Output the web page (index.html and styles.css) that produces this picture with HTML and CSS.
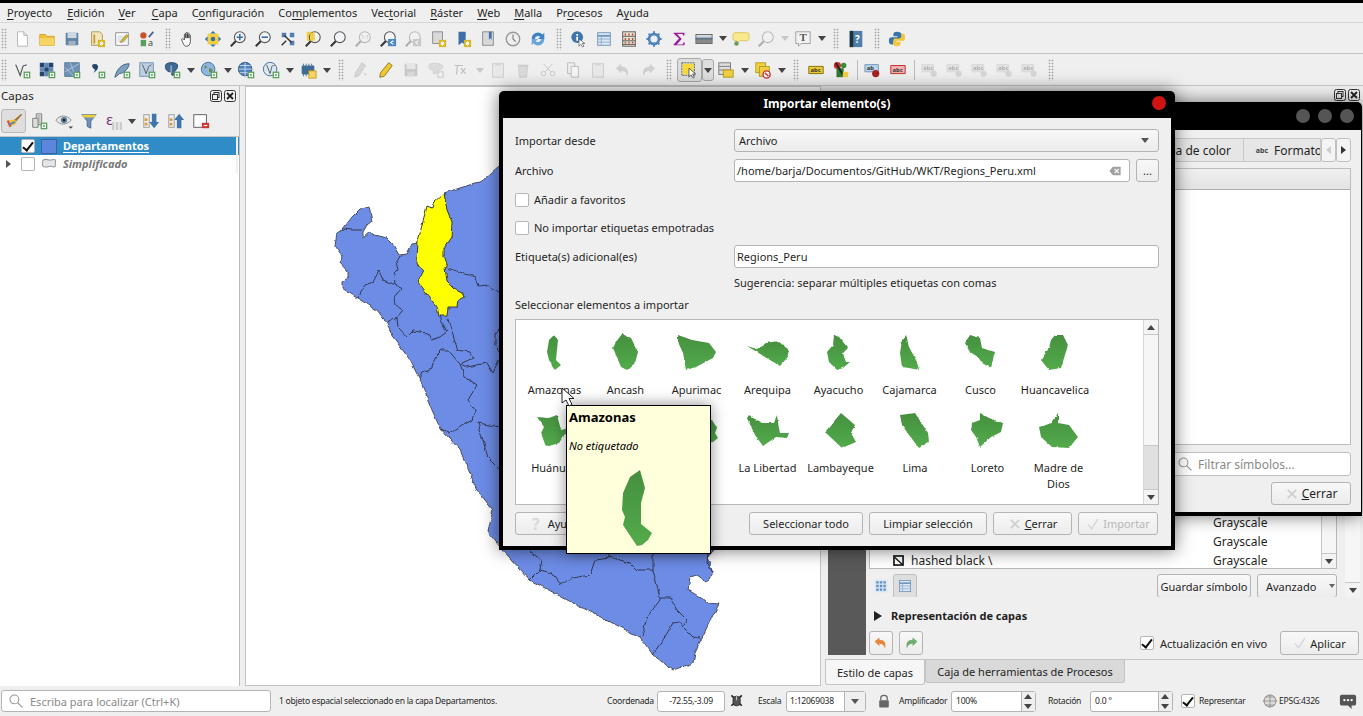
FILE: index.html
```html
<!DOCTYPE html>
<html lang="es">
<head>
    <meta charset="UTF-8">
    <title>QGIS - Importar elemento(s)</title>
    <link rel="stylesheet" href="styles.css">
</head>
<body>
<svg class="sprite" xmlns="http://www.w3.org/2000/svg">
    <defs>
        <linearGradient id="sym-green" x1="0" y1="0" x2="0" y2="1"><stop offset="0" stop-color="#458f3f"/><stop offset="1" stop-color="#53ab4b"/></linearGradient>
        <filter id="rough" x="-5%" y="-5%" width="110%" height="110%"><feTurbulence type="fractalNoise" baseFrequency="0.13" numOctaves="2" seed="4"/><feDisplacementMap in="SourceGraphic" scale="4" xChannelSelector="R" yChannelSelector="G"/></filter>
        <filter id="rough-s" x="-15%" y="-15%" width="130%" height="130%"><feTurbulence type="fractalNoise" baseFrequency="0.2" numOctaves="2" seed="7"/><feDisplacementMap in="SourceGraphic" scale="2.500" xChannelSelector="R" yChannelSelector="G"/></filter>
    </defs>
    <symbol id="b-plus" viewBox="0 0 20 20"><rect x="12.500" y="12.500" width="6" height="6" fill="#fff" stroke="#5a9e5a" stroke-width="1.400"/><path d="M15.500 14v3M14 15.500h3" stroke="#5a9e5a"/></symbol>
    <symbol id="b-star" viewBox="0 0 20 20"><rect x="11" y="11" width="8" height="8" fill="#d8b62a"/><path d="M15 12.500v5M12.800 15h4.400M13.400 13.400l3.200 3.200M16.600 13.400l-3.200 3.200" stroke="#fff"/></symbol>
    <symbol id="i-new" viewBox="0 0 20 20"><path d="M5 2h7l4 4v12H5z" fill="#fff" stroke="#b3b3b3"/><path d="M12 2v4h4" fill="#e6e6e6" stroke="#b3b3b3"/></symbol>
    <symbol id="i-open" viewBox="0 0 20 20"><path d="M2 5h6l2 2h8v10H2z" fill="#eec23f" stroke="#cfa02a"/><path d="M2 9h16v8H2z" fill="#f7d565"/></symbol>
    <symbol id="i-save" viewBox="0 0 20 20"><rect x="3" y="3" width="14" height="14" rx="1" fill="#5f83a6"/><rect x="5" y="3" width="10" height="6" fill="#cfd8e0"/><rect x="6" y="12" width="8" height="5" fill="#9fb0c0"/></symbol>
    <symbol id="i-saveas" viewBox="0 0 20 20"><path d="M4 2h9l3 3v12H4z" fill="#f2e6bf" stroke="#a8935a"/><path d="M6 5h2v10H6z" fill="#c79a3a"/><use href="#b-star"/></symbol>
    <symbol id="i-layout" viewBox="0 0 20 20"><path d="M3 3h14v14H3z" fill="#fff" stroke="#888"/><path d="M5 6h10v8H5z" fill="#dbe6f0"/><path d="M9 12l6-7 2 2-6 6-3 1z" fill="#d8b62a" stroke="#8a7420" stroke-width=".6"/></symbol>
    <symbol id="i-style" viewBox="0 0 20 20"><circle cx="6" cy="6" r="3.500" fill="#c8532c"/><rect x="3" y="11" width="6" height="7" fill="#5aa05a"/><path d="M12 8l5-6" stroke="#44698f" stroke-width="2"/></symbol>
    <symbol id="i-hand" viewBox="0 0 20 20"><path d="M6 11V5c0-1 1.600-1 1.600 0v4V3.500c0-1 1.700-1 1.700 0V9V4c0-1 1.700-1 1.700 0v5V6c0-1 1.600-1 1.600 0v7c0 3-2 5-4.500 5S5 16 3 11c-.5-1.500 1.500-2 3 0z" fill="#fff" stroke="#333" stroke-width=".9"/></symbol>
    <symbol id="i-pan" viewBox="0 0 20 20"><rect x="4" y="4" width="12" height="12" fill="#f0d040"/><path d="M10 1l3 3H7zM10 19l-3-3h6zM1 10l3-3v6zM19 10l-3 3V7z" fill="#3a6ea8"/><circle cx="10" cy="10" r="2.500" fill="#3a6ea8"/></symbol>
    <symbol id="m-glass" viewBox="0 0 20 20"><path d="M8 12l-6 6" stroke="#333" stroke-width="2.200"/><circle cx="12" cy="8" r="6" fill="#f2f5f8" stroke="#555" stroke-width="1.200"/></symbol>
    <symbol id="i-zin" viewBox="0 0 20 20"><use href="#m-glass"/><path d="M12 4.500v7M8.500 8h7" stroke="#3a6ea8" stroke-width="1.800"/></symbol>
    <symbol id="i-zout" viewBox="0 0 20 20"><use href="#m-glass"/><path d="M8.500 8h7" stroke="#3a6ea8" stroke-width="1.800"/></symbol>
    <symbol id="i-zfull" viewBox="0 0 20 20"><path d="M3 3h5v5H3zM12 3h5v5h-5zM12 12h5v5h-5z" fill="#4f7fb5"/><path d="M6 6l8 8M3 17l5-5" stroke="#333" stroke-width="1.600"/></symbol>
    <symbol id="i-zsel" viewBox="0 0 20 20"><rect x="3" y="2" width="8" height="10" fill="#f0d040"/><use href="#m-glass"/><path d="M7 3h5v9H7z" fill="#f0d040"/></symbol>
    <symbol id="i-zlayer" viewBox="0 0 20 20"><use href="#m-glass"/></symbol>
    <symbol id="i-zlast" viewBox="0 0 20 20"><use href="#m-glass"/><rect x="10" y="10" width="9" height="8" fill="#4f88c0"/><path d="M16 12l-3 2 3 2" fill="none" stroke="#fff" stroke-width="1.200"/></symbol>
    <symbol id="i-book" viewBox="0 0 20 20"><path d="M4 2h11v13H4z" fill="#d8d8d8" stroke="#888"/><use href="#b-star"/></symbol>
    <symbol id="i-bookb" viewBox="0 0 20 20"><path d="M5 2h8v15l-4-3-4 3z" fill="#3f6fa8"/><use href="#b-star"/></symbol>
    <symbol id="i-bookg" viewBox="0 0 20 20"><path d="M4 2h12v15H4z" fill="#d8d8d8" stroke="#888"/><path d="M11 2h3v9l-1.500-2L11 11z" fill="#3f6fa8"/></symbol>
    <symbol id="i-clock" viewBox="0 0 20 20"><circle cx="10" cy="10" r="7.500" fill="#eee" stroke="#999" stroke-width="1.500"/><path d="M10 5v5l3 3" fill="none" stroke="#777" stroke-width="1.200"/></symbol>
    <symbol id="i-refresh" viewBox="0 0 20 20"><path d="M3 10a7 7 0 0 1 12-5l2-2v7h-7l2.500-2.500A3.600 3.600 0 0 0 6.500 10z" fill="#3f83c4"/><path d="M17 10a7 7 0 0 1-12 5l-2 2v-7h7l-2.500 2.500A3.600 3.600 0 0 0 13.500 10z" fill="#6aa6dc"/></symbol>
    <symbol id="i-info" viewBox="0 0 20 20"><circle cx="8" cy="8" r="6.500" fill="#3f74ad"/><path d="M7 4.500h2v2H7zM7 7.500h2V12H7z" fill="#fff"/><path d="M10 10v8l2-2 2 3 1.500-1-2-3h3z" fill="#fff" stroke="#444" stroke-width=".7"/></symbol>
    <symbol id="i-table" viewBox="0 0 20 20"><rect x="3" y="3" width="14" height="14" fill="#dbe8f4" stroke="#6c93ba"/><path d="M3 6.500h14" stroke="#6c93ba" stroke-width="2"/><path d="M3 10h14M3 13.500h14M7 7v10" stroke="#8eaccb"/></symbol>
    <symbol id="i-calc" viewBox="0 0 20 20"><rect x="3" y="2" width="14" height="16" fill="#e8e0d0" stroke="#555"/><path d="M3 7h14M3 12h14M3 16h14" stroke="#555"/><path d="M6 4v2M10 4v2M14 4v2M6 9v2M10 9v2M14 9v2M6 13v2M10 13v2M14 13v2" stroke="#b34a3a" stroke-width="1.500"/></symbol>
    <symbol id="i-gear" viewBox="0 0 20 20"><circle cx="10" cy="10" r="5.500" fill="none" stroke="#4f83bd" stroke-width="3"/><path d="M10 1.500v4M10 14.500v4M1.500 10h4M14.500 10h4M4 4l3 3M13 13l3 3M16 4l-3 3M7 13l-3 3" stroke="#4f83bd" stroke-width="2.200"/></symbol>
    <symbol id="i-sigma" viewBox="0 0 20 20"><path d="M4 3h12v3h-1.500l-.5-1.500H8l5 5.500-5.500 6H14l1-2h1.500L16 17H4v-1l6-6.500L4 4z" fill="#9a1aa0"/></symbol>
    <symbol id="i-ruler" viewBox="0 0 20 20"><rect x="1" y="5" width="18" height="5" fill="#d8d8d8" stroke="#666"/><rect x="1" y="10" width="18" height="5" fill="#888" stroke="#666"/><path d="M1 9h18" stroke="#3a6ea8"/></symbol>
    <symbol id="i-note" viewBox="0 0 20 20"><path d="M3 3h14c2 0 2 2 2 3v3c0 3-2 3-4 3H8l-4 4 1-4c-3 0-4-1-4-3V6c0-2 1-3 2-3z" fill="#f7e98c" stroke="#d6c45a"/><circle cx="5" cy="15" r="2.500" fill="#6a9a55"/></symbol>
    <symbol id="i-tbub" viewBox="0 0 20 20"><path d="M2 2h16v13H8l-3 3v-3H2z" fill="#f2f2f2" stroke="#999"/></symbol>
    <symbol id="i-help" viewBox="0 0 20 20"><rect x="3" y="1" width="14" height="18" fill="#4f7ea8"/><rect x="3" y="1" width="4" height="18" fill="#1e2f3e"/></symbol>
    <symbol id="i-python" viewBox="0 0 20 20"><path d="M10 2c-3 0-4 1-4 3v2h4.500v1H4c-2 0-3 1-3 4s1 4 3 4h2v-2.500c0-2 1-3 3-3h4c1.500 0 2-.5 2-2V5c0-2-2-3-5-3z" fill="#3a74a8"/><path d="M10 18c3 0 4-1 4-3v-2H9.500v-1H16c2 0 3-1 3-4s-1-4-3-4h-1v2.500c0 2-1 3-3 3H8c-1.500 0-2 .5-2 2V15c0 2 1 3 4 3z" fill="#f2c838"/></symbol>
    <symbol id="i-vline" viewBox="0 0 20 20"><path d="M3 4l5 12 3-10c1-2 3 0 4-2" fill="none" stroke="#555" stroke-width="1.300"/><use href="#b-plus"/></symbol>
    <symbol id="i-raster" viewBox="0 0 20 20"><path d="M2 2h5v5H2zM12 2h5v5h-5zM7 7h5v5H7zM2 12h5v5H2z" fill="#24466e"/><path d="M7 2h5v5H7zM2 7h5v5H2zM12 7h5v5h-5zM7 12h5v5H7z" fill="#5f88b5"/><use href="#b-plus"/></symbol>
    <symbol id="i-mesh" viewBox="0 0 20 20"><rect x="2" y="2" width="16" height="15" fill="#6f92b8" stroke="#4d6d90"/><path d="M2 12L18 3M2 7l10 10M8 2l6 15" stroke="#c4d4e4" stroke-width=".8"/><use href="#b-plus"/></symbol>
    <symbol id="i-comma" viewBox="0 0 20 20"><path d="M5 4c4-2 7 0 6 4-.5 2-3 4-5 5 2-2 2-3 1-4C5 8 4 6 5 4z" fill="#24466e"/><use href="#b-plus"/></symbol>
    <symbol id="i-feather" viewBox="0 0 20 20"><path d="M2 18C4 10 9 3 18 3c-1 5-4 10-11 11l-3 3z" fill="#7f9fc0" stroke="#3a5f85"/><use href="#b-plus"/></symbol>
    <symbol id="i-vvirt" viewBox="0 0 20 20"><rect x="2" y="2" width="15" height="15" fill="#bcd0e4" stroke="#6c8fb2"/><path d="M5 4l4 10 3-8c1-2 2 0 3-2" fill="none" stroke="#555"/><use href="#b-plus"/></symbol>
    <symbol id="i-pg" viewBox="0 0 20 20"><path d="M3 4c3-3 10-3 13 0 1 3-1 6-3 7v4l-3 1-1-4H7C3 11 2 7 3 4z" fill="#3f6a96" stroke="#24466e"/><path d="M9 5v9" stroke="#cfdcea"/><use href="#b-plus"/></symbol>
    <symbol id="m-globe" viewBox="0 0 20 20"><circle cx="9" cy="9" r="7.500" fill="#8fb6dc" stroke="#3f6a96"/><path d="M5 5c2 0 3 1 3 2L5 9zM10 8l4 1-1 4-3-1z" fill="#6a8a5a"/></symbol>
    <symbol id="i-wms" viewBox="0 0 20 20"><use href="#m-globe"/><use href="#b-plus"/></symbol>
    <symbol id="i-wcs" viewBox="0 0 20 20"><circle cx="9" cy="9" r="7.500" fill="#4f83bd" stroke="#24466e"/><path d="M1.500 9h15M9 1.500v15M3 5h12M3 13h12" stroke="#dbe8f4" stroke-width=".9"/><use href="#b-plus"/></symbol>
    <symbol id="i-wfs" viewBox="0 0 20 20"><circle cx="9" cy="9" r="7.500" fill="#dbe8f4" stroke="#3f6a96"/><path d="M5 4l4 10 2-8c1-2 2 0 3-1" fill="none" stroke="#555"/><use href="#b-plus"/></symbol>
    <symbol id="i-chip" viewBox="0 0 20 20"><rect x="3" y="5" width="14" height="10" rx="1" fill="#3f6a96"/><path d="M5 3v2M8 3v2M11 3v2M14 3v2M5 15v2M8 15v2" stroke="#3f6a96"/><rect x="11" y="11" width="8" height="8" fill="#f7d565" stroke="#c79a1e"/></symbol>
    <symbol id="i-pencil" viewBox="0 0 20 20"><path d="M13 2l4 3L8 17l-5 1 1-5z" fill="#f0c830" stroke="#8a7420"/></symbol>
    <symbol id="i-pencilg" viewBox="0 0 20 20"><path d="M11 2l4 3-7 11-5 2 1-5z" fill="#aaa" stroke="#888"/><path d="M13 12l4 3-3 2z" fill="#bbb"/></symbol>
    <symbol id="i-fx" viewBox="0 0 20 20"><path d="M3 5h9M6 5l-1 10M10 8l5 6M15 8l-5 6" stroke="#666" stroke-width="1.300" fill="none"/></symbol>
    <symbol id="i-bub" viewBox="0 0 20 20"><path d="M2 5c0-3 10-3 14-1 3 2 1 6-2 6l-3 1v3H7v-4C3 10 2 8 2 5z" fill="#bbb" stroke="#999"/><use href="#b-star"/></symbol>
    <symbol id="i-trash" viewBox="0 0 20 20"><path d="M5 6h10l-1 12H6z" fill="#c8b0a8" stroke="#a08078"/><path d="M4 4h12v2H4z" fill="#b09088"/></symbol>
    <symbol id="i-cut" viewBox="0 0 20 20"><circle cx="5" cy="14" r="2.500" fill="none" stroke="#777"/><circle cx="15" cy="14" r="2.500" fill="none" stroke="#777"/><path d="M7 12l8-9M13 12L5 3" stroke="#777"/></symbol>
    <symbol id="i-copy" viewBox="0 0 20 20"><path d="M4 2h8v12H4z" fill="#eee" stroke="#555"/><path d="M8 6h8v12H8z" fill="#fff" stroke="#555"/></symbol>
    <symbol id="i-paste" viewBox="0 0 20 20"><rect x="4" y="3" width="12" height="15" fill="#ddd" stroke="#888"/><rect x="7" y="2" width="6" height="3" fill="#aaa"/></symbol>
    <symbol id="i-undo" viewBox="0 0 20 20"><path d="M2 8l6-5v3c6 0 9 4 7 11-1-4-3-6-7-6v3z" fill="#999"/></symbol>
    <symbol id="i-redo" viewBox="0 0 20 20"><path d="M18 8l-6-5v3C6 6 3 10 5 17c1-4 3-6 7-6v3z" fill="#999"/></symbol>
    <symbol id="i-select" viewBox="0 0 20 20"><rect x="3" y="3" width="12" height="12" fill="#f7d93a"/><rect x="2" y="2" width="14" height="14" fill="none" stroke="#555" stroke-dasharray="2 1"/><path d="M10 8v10l2.500-2.500 2 3.500 1.500-1-2-3.500h3.500z" fill="#fff" stroke="#333" stroke-width=".8"/></symbol>
    <symbol id="i-attr" viewBox="0 0 20 20"><rect x="2" y="2" width="13" height="13" fill="#ddd" stroke="#777"/><path d="M2 6h13M2 10h13" stroke="#777"/><rect x="7" y="10" width="11" height="8" fill="#f0d040" stroke="#b39a20"/></symbol>
    <symbol id="i-desel" viewBox="0 0 20 20"><rect x="2" y="2" width="11" height="11" fill="#f0d040" stroke="#b39a20"/><rect x="6" y="6" width="11" height="11" fill="#f0d040" stroke="#b39a20"/><circle cx="14" cy="15" r="4" fill="#fff" stroke="#c83030" stroke-width="1.500"/><path d="M12 13l4 4" stroke="#c83030" stroke-width="1.500"/></symbol>
    <symbol id="i-abc" viewBox="0 0 20 20"><path d="M2 6h16v8H2z" fill="#eecb30" stroke="#7a6a10"/></symbol>
    <symbol id="i-pin" viewBox="0 0 20 20"><circle cx="6" cy="5" r="4" fill="#c83030"/><circle cx="13" cy="5" r="3" fill="#3a8a3a"/><rect x="5" y="8" width="8" height="10" fill="#2f7a2f"/><path d="M4 2l8 13" stroke="#222" stroke-width="2"/><rect x="12" y="12" width="6" height="6" fill="#f0d040"/></symbol>
    <symbol id="i-abcb" viewBox="0 0 20 20"><path d="M1 4h15v8H1z" fill="#bcd4ec" stroke="#6c93ba"/><circle cx="13" cy="14" r="4" fill="#a82020"/></symbol>
    <symbol id="i-abcr" viewBox="0 0 20 20"><path d="M2 5h16v9H2z" fill="#f2b0b0" stroke="#c02020"/></symbol>
    <symbol id="i-abcg" viewBox="0 0 20 20"><path d="M1 4h13v8H1z" fill="#ccc" stroke="#aaa"/><circle cx="14" cy="14" r="3.500" fill="#aaa"/></symbol>
    <symbol id="i-brush" viewBox="0 0 20 20"><path d="M18 2l-8 7 2 2 7-8z" fill="#a07030"/><path d="M2 10l9-2 2 5-8 4z" fill="#eec23f"/><path d="M2 10l3 7 2-1-3-7z" fill="#d05050"/><path d="M5 14l6-3" stroke="#5a80c0" stroke-width="2"/></symbol>
    <symbol id="i-addgrp" viewBox="0 0 20 20"><path d="M7 2h6v12H7z" fill="#eee" stroke="#777"/><path d="M3 7h6v10H3z" fill="#ddd" stroke="#777"/><path d="M9 3v10M11 3v10" stroke="#999"/><use href="#b-plus"/></symbol>
    <symbol id="i-eye" viewBox="0 0 20 20"><path d="M1 9c4-6 12-6 17 0-5 6-13 6-17 0z" fill="#e6e6e6" stroke="#888"/><circle cx="10" cy="9" r="3.500" fill="#5a7f9e"/><circle cx="10" cy="9" r="1.500" fill="#222"/><path d="M15 16h5l-2.500 2.500z" fill="#444"/></symbol>
    <symbol id="i-funnel" viewBox="0 0 20 20"><path d="M2 3h16l-6 7v8l-4-2v-6z" fill="#6f92b8" stroke="#3f6a96"/><path d="M2 3h16l-2 3H4z" fill="#f0d040"/></symbol>
    <symbol id="i-eps" viewBox="0 0 10 8"><path d="M0 0h10v8H0z" fill="#ccc"/><path d="M3 0v8M7 0v8" stroke="#fff"/></symbol>
    <symbol id="i-expand" viewBox="0 0 20 20"><rect x="2" y="3" width="6" height="14" fill="none" stroke="#999"/><path d="M3 7h3v3H3zM3 12h3v3H3z" fill="#e09a3a"/><path d="M11 2h5v9h3l-5.500 7L8 11h3z" fill="#3f74ad"/></symbol>
    <symbol id="i-collapse" viewBox="0 0 20 20"><rect x="2" y="3" width="6" height="14" fill="none" stroke="#999"/><path d="M3 7h3v3H3zM3 12h3v3H3z" fill="#e09a3a"/><path d="M11 18h5V9h3L13.500 2 8 9h3z" fill="#3f74ad"/></symbol>
    <symbol id="i-remove" viewBox="0 0 20 20"><rect x="2" y="3" width="14" height="14" fill="#fff" stroke="#555"/><rect x="11" y="12" width="8" height="6" fill="#d03030"/><path d="M13 15h4" stroke="#fff" stroke-width="1.400"/></symbol>
    <symbol id="i-search" viewBox="0 0 20 20"><circle cx="8" cy="8" r="5.500" fill="none" stroke="#999" stroke-width="1.300"/><path d="M12 12l6 6" stroke="#999" stroke-width="1.600"/></symbol>
    <symbol id="i-mouse" viewBox="0 0 20 20"><path d="M3 3l13 13M16 3L3 16" stroke="#222" stroke-width="2"/><rect x="5" y="4" width="9" height="12" rx="4" fill="#555" stroke="#222"/><path d="M9.500 4v5" stroke="#eee"/></symbol>
    <symbol id="i-lock" viewBox="0 0 20 20"><path d="M6 9V6c0-4 8-4 8 0v3" fill="none" stroke="#666" stroke-width="1.600"/><rect x="4" y="9" width="12" height="9" rx="1" fill="#666"/></symbol>
    <symbol id="i-crs" viewBox="0 0 20 20"><circle cx="10" cy="10" r="7.500" fill="#ddd" stroke="#777"/><path d="M1 10h18M10 2v16M4 5h12M4 15h12" stroke="#777" stroke-width=".8"/></symbol>
    <symbol id="i-chat" viewBox="0 0 20 20"><path d="M3 3h14c1 0 2 1 2 2v8c0 1-1 2-2 2h-3v4l-4-4H3c-1 0-2-1-2-2V5c0-1 1-2 2-2z" fill="#555"/><circle cx="6" cy="9" r="1.300" fill="#fff"/><circle cx="10" cy="9" r="1.300" fill="#fff"/><circle cx="14" cy="9" r="1.300" fill="#fff"/></symbol>
    <symbol id="i-poly" viewBox="0 0 20 20"><path d="M2 6c2-3 5-2 8-1s6-2 8 0c1 3-1 5 0 8-3 2-5-1-8 0s-6 2-8-1c-1-2 1-4 0-6z" fill="#e6e6e6" stroke="#999" stroke-width="1.300"/></symbol>
    <symbol id="i-hash" viewBox="0 0 20 20"><rect x="3" y="3" width="14" height="14" fill="#fff" stroke="#111" stroke-width="2.500"/><path d="M4 5l12 11" stroke="#111" stroke-width="2"/></symbol>
    <symbol id="i-grid" viewBox="0 0 20 20"><rect x="2" y="2" width="16" height="16" fill="#dbe8f4"/><path d="M4 4h3v3H4zM8.500 4h3v3h-3zM13 4h3v3h-3zM4 8.500h3v3H4zM8.500 8.500h3v3h-3zM13 8.500h3v3h-3zM4 13h3v3H4zM8.500 13h3v3h-3zM13 13h3v3h-3z" fill="#5c8fc4"/></symbol>
    <symbol id="i-undo-o" viewBox="0 0 20 20"><path d="M2 8l6-5v3c6 0 9 4 7 11-1-4-3-6-7-6v3z" fill="#e8843c"/></symbol>
    <symbol id="i-redo-g" viewBox="0 0 20 20"><path d="M18 8l-6-5v3C6 6 3 10 5 17c1-4 3-6 7-6v3z" fill="#6fae6f"/></symbol>
    <symbol id="i-clear" viewBox="0 0 20 20"><path d="M2 10l5-6h11v12H7z" fill="#a0a0a0"/><path d="M9.500 7l6 6M15.500 7l-6 6" stroke="#fff" stroke-width="1.700"/></symbol>
    <symbol id="i-x" viewBox="0 0 20 20"><path d="M4 4l12 12M16 4L4 16" stroke="#cfcfcf" stroke-width="2.500"/></symbol>
    <symbol id="i-check" viewBox="0 0 20 20"><path d="M3 11l5 6L17 3" fill="none" stroke="#d4d4d4" stroke-width="1.800"/></symbol>
    <symbol id="i-float" viewBox="0 0 12 12"><rect x=".5" y=".5" width="11" height="11" rx="2" fill="#efefef" stroke="#333"/><rect x="4" y="2.500" width="5" height="5" fill="none" stroke="#333"/><rect x="2.500" y="4.500" width="5" height="5" fill="#efefef" stroke="#333"/></symbol>
    <symbol id="i-close" viewBox="0 0 12 12"><rect x=".5" y=".5" width="11" height="11" rx="2" fill="#efefef" stroke="#333"/><path d="M3 3l6 6M9 3L3 9" stroke="#222" stroke-width="1.800"/></symbol>
</svg>

<div class="app">
    <div class="topline"></div>
    <div class="menubar">
        <span class="menu-item"><u>P</u>royecto</span>
        <span class="menu-item menu-edit"><u>E</u>dición</span>
        <span class="menu-item"><u>V</u>er</span>
        <span class="menu-item menu-capa"><u>C</u>apa</span>
        <span class="menu-item">C<u>o</u>nfiguración</span>
        <span class="menu-item">Co<u>m</u>plementos</span>
        <span class="menu-item">Vec<u>t</u>orial</span>
        <span class="menu-item"><u>R</u>áster</span>
        <span class="menu-item"><u>W</u>eb</span>
        <span class="menu-item"><u>M</u>alla</span>
        <span class="menu-item">Pr<u>o</u>cesos</span>
        <span class="menu-item">A<u>y</u>uda</span>
    </div>

    <div class="toolbar toolbar-one">
        <span class="grip grip-first"></span>
        <span class="tb"><svg class="ic"><use href="#i-new"/></svg></span>
        <span class="tb"><svg class="ic"><use href="#i-open"/></svg></span>
        <span class="tb"><svg class="ic"><use href="#i-save"/></svg></span>
        <span class="tb"><svg class="ic"><use href="#i-saveas"/></svg></span>
        <span class="tb"><svg class="ic"><use href="#i-layout"/></svg></span>
        <span class="tb"><svg class="ic" viewBox="0 0 20 20"><use href="#i-style"/><text x="11" y="18" class="ic-txt">a</text></svg></span>
        <span class="grip"></span>
        <span class="tb"><svg class="ic"><use href="#i-hand"/></svg></span>
        <span class="tb"><svg class="ic"><use href="#i-pan"/></svg></span>
        <span class="tb"><svg class="ic"><use href="#i-zin"/></svg></span>
        <span class="tb"><svg class="ic"><use href="#i-zout"/></svg></span>
        <span class="tb"><svg class="ic"><use href="#i-zfull"/></svg></span>
        <span class="tb"><svg class="ic"><use href="#i-zsel"/></svg></span>
        <span class="tb"><svg class="ic"><use href="#i-zlayer"/></svg></span>
        <span class="tb off"><svg class="ic" viewBox="0 0 20 20"><use href="#i-zlayer"/><text x="8" y="10.500" class="ic-tiny">1:1</text></svg></span>
        <span class="tb"><svg class="ic"><use href="#i-zlast"/></svg></span>
        <span class="tb off"><svg class="ic"><use href="#i-zlast"/></svg></span>
        <span class="tb"><svg class="ic"><use href="#i-book"/></svg></span>
        <span class="tb"><svg class="ic"><use href="#i-bookb"/></svg></span>
        <span class="tb"><svg class="ic"><use href="#i-bookg"/></svg></span>
        <span class="tb"><svg class="ic"><use href="#i-clock"/></svg></span>
        <span class="tb"><svg class="ic"><use href="#i-refresh"/></svg></span>
        <span class="grip"></span>
        <span class="tb"><svg class="ic"><use href="#i-info"/></svg></span>
        <span class="tb"><svg class="ic"><use href="#i-table"/></svg></span>
        <span class="tb"><svg class="ic"><use href="#i-calc"/></svg></span>
        <span class="tb"><svg class="ic"><use href="#i-gear"/></svg></span>
        <span class="tb"><svg class="ic"><use href="#i-sigma"/></svg></span>
        <span class="tb"><svg class="ic"><use href="#i-ruler"/></svg></span>
        <span class="dd"></span>
        <span class="tb"><svg class="ic"><use href="#i-note"/></svg></span>
        <span class="tb off"><svg class="ic"><use href="#i-zlayer"/></svg></span>
        <span class="dd dd-off"></span>
        <span class="tb"><svg class="ic" viewBox="0 0 20 20"><use href="#i-tbub"/><text x="6" y="12.500" class="ic-t">T</text></svg></span>
        <span class="dd"></span>
        <span class="grip"></span>
        <span class="tb"><svg class="ic" viewBox="0 0 20 20"><use href="#i-help"/><text x="9" y="14" class="ic-q">?</text></svg></span>
        <span class="grip"></span>
        <span class="tb"><svg class="ic"><use href="#i-python"/></svg></span>
    </div>

    <div class="toolbar toolbar-two">
        <span class="grip grip-first"></span>
        <span class="tb"><svg class="ic"><use href="#i-vline"/></svg></span>
        <span class="tb"><svg class="ic"><use href="#i-raster"/></svg></span>
        <span class="tb"><svg class="ic"><use href="#i-mesh"/></svg></span>
        <span class="tb"><svg class="ic"><use href="#i-comma"/></svg></span>
        <span class="tb"><svg class="ic"><use href="#i-feather"/></svg></span>
        <span class="tb"><svg class="ic"><use href="#i-vvirt"/></svg></span>
        <span class="tb"><svg class="ic"><use href="#i-pg"/></svg></span>
        <span class="dd"></span>
        <span class="tb"><svg class="ic"><use href="#i-wms"/></svg></span>
        <span class="dd"></span>
        <span class="tb"><svg class="ic"><use href="#i-wcs"/></svg></span>
        <span class="tb"><svg class="ic"><use href="#i-wfs"/></svg></span>
        <span class="dd"></span>
        <span class="tb"><svg class="ic"><use href="#i-chip"/></svg></span>
        <span class="dd"></span>
        <span class="grip"></span>
        <span class="tb off"><svg class="ic"><use href="#i-pencilg"/></svg></span>
        <span class="tb"><svg class="ic"><use href="#i-pencil"/></svg></span>
        <span class="tb off"><svg class="ic"><use href="#i-save"/></svg></span>
        <span class="tb off"><svg class="ic"><use href="#i-bub"/></svg></span>
        <span class="tb off"><svg class="ic"><use href="#i-fx"/></svg></span>
        <span class="dd dd-off"></span>
        <span class="tb off"><svg class="ic"><use href="#i-paste"/></svg></span>
        <span class="tb off"><svg class="ic"><use href="#i-trash"/></svg></span>
        <span class="tb off"><svg class="ic"><use href="#i-cut"/></svg></span>
        <span class="tb off"><svg class="ic"><use href="#i-copy"/></svg></span>
        <span class="tb off"><svg class="ic"><use href="#i-paste"/></svg></span>
        <span class="tb off"><svg class="ic"><use href="#i-undo"/></svg></span>
        <span class="tb off"><svg class="ic"><use href="#i-redo"/></svg></span>
        <span class="grip"></span>
        <span class="tb tb-on"><svg class="ic"><use href="#i-select"/></svg></span>
        <span class="dd dd-on"></span>
        <span class="tb"><svg class="ic"><use href="#i-attr"/></svg></span>
        <span class="dd"></span>
        <span class="tb"><svg class="ic"><use href="#i-desel"/></svg></span>
        <span class="dd"></span>
        <span class="grip"></span>
        <span class="tb"><svg class="ic" viewBox="0 0 20 20"><use href="#i-abc"/><text x="4" y="12.500" class="ic-abc">abc</text></svg></span>
        <span class="tb"><svg class="ic"><use href="#i-pin"/></svg></span>
        <span class="tb-sep"></span>
        <span class="tb"><svg class="ic" viewBox="0 0 20 20"><use href="#i-abcb"/><text x="3" y="10.500" class="ic-abc">ab</text></svg></span>
        <span class="tb"><svg class="ic" viewBox="0 0 20 20"><use href="#i-abcr"/><text x="4" y="12" class="ic-abc">abc</text></svg></span>
        <span class="tb-sep"></span>
        <span class="tb off"><svg class="ic" viewBox="0 0 20 20"><use href="#i-abcg"/><text x="2.500" y="10.500" class="ic-abc">abc</text></svg></span>
        <span class="tb off"><svg class="ic" viewBox="0 0 20 20"><use href="#i-abcg"/><text x="2.500" y="10.500" class="ic-abc">abc</text></svg></span>
        <span class="tb off"><svg class="ic" viewBox="0 0 20 20"><use href="#i-abcg"/><text x="2.500" y="10.500" class="ic-abc">abc</text></svg></span>
        <span class="tb off"><svg class="ic" viewBox="0 0 20 20"><use href="#i-abcg"/><text x="2.500" y="10.500" class="ic-abc">abc</text></svg></span>
        <span class="tb off"><svg class="ic" viewBox="0 0 20 20"><use href="#i-abcg"/><text x="2.500" y="10.500" class="ic-abc">abc</text></svg></span>
        <span class="grip"></span>
    </div>

    <div class="main">
        <aside class="layers">
            <div class="dock-title dock-title-l">
                <span class="dock-name">Capas</span>
                <span class="dock-btns">
                    <svg class="dock-ic"><use href="#i-float"/></svg>
                    <svg class="dock-ic"><use href="#i-close"/></svg>
                </span>
            </div>
            <div class="layers-tools">
                <span class="lt lt-on"><svg class="ic"><use href="#i-brush"/></svg></span>
                <span class="lt"><svg class="ic"><use href="#i-addgrp"/></svg></span>
                <span class="lt"><svg class="ic"><use href="#i-eye"/></svg></span>
                <span class="lt"><svg class="ic"><use href="#i-funnel"/></svg></span>
                <span class="lt lt-expr"><span class="eps">ε</span><svg class="eps-ic"><use href="#i-eps"/></svg></span>
                <span class="dd"></span>
                <span class="lt"><svg class="ic"><use href="#i-expand"/></svg></span>
                <span class="lt"><svg class="ic"><use href="#i-collapse"/></svg></span>
                <span class="lt"><svg class="ic"><use href="#i-remove"/></svg></span>
            </div>
            <div class="tree">
                <div class="tree-row tree-sel">
                    <span class="arrow-none"></span>
                    <span class="check checked"></span>
                    <span class="swatch"></span>
                    <span class="tree-name">Departamentos</span>
                </div>
                <div class="tree-row">
                    <span class="arrow-none arrow-right"></span>
                    <span class="check"></span>
                    <svg class="tree-ic"><use href="#i-poly"/></svg>
                    <span class="tree-name tree-off">Simplificado</span>
                </div>
            </div>
        </aside>

        <div class="map">
            <svg class="map-svg" viewBox="246 87 574 598" xmlns="http://www.w3.org/2000/svg">
                <g filter="url(#rough)">
                    <polygon class="dept" points="499,166 482,181 444,193 418,243 412,244 407,254 399,255 392,243 387,238 374,235 370,232 363,238 363,232 367,225 372,221 369,207 360,209 352,217 343,229 337,233 335,246 343,257 340,263 348,272 348,278 342,282 342,288 357,298 377,310 387,323 393,337 410,360 420,380 432,410 440,428 460,450 477,490 493,510 488,532 500,547 530,580 573,603 640,637 653,655 673,670 693,663 695,652 712,617 719,604 707,603 700,597 688,590 690,577 697,575 707,582 713,573 707,557 713,550 760,500 760,200"/>
                    <polyline class="limit" points="343,229 352,230 362,230"/>
                    <polyline class="limit" points="399,255 396,262 398,270 395,273 396,285 402,288 394,297 395,305 403,310 397,317"/>
                    <polyline class="limit" points="357,298 365,285 373,282 379,271 383,280 396,285"/>
                    <polyline class="limit" points="387,322 397,317 398,327 407,337 413,331 427,333 432,340 440,337 447,332 439,316"/>
                    <polyline class="limit" points="447,316 455,342 458,350 470,352 473,358 460,364 448,350 442,350 435,357 432,368 420,373 420,380"/>
                    <polyline class="limit" points="460,364 467,367 487,363 493,373 499,360"/>
                    <polyline class="limit" points="460,364 465,377 477,385 468,400 475,410 472,420 450,433 440,428"/>
                    <polyline class="limit" points="447,268 475,277 478,286 488,285 499,292"/>
                    <polyline class="limit" points="499,330 495,335 495,345 499,352"/>
                    <polyline class="limit" points="478,423 488,458 500,470"/>
                    <polyline class="limit" points="478,423 500,427"/>
                    <polyline class="limit" points="530,552 542,560 540,570 530,580"/>
                    <polyline class="limit" points="540,570 552,573 560,584 573,578 590,575 595,560 610,558 610,550"/>
                    <polyline class="limit" points="610,557 630,563 637,570 653,570 653,550"/>
                    <polyline class="limit" points="653,570 660,597 660,600 647,617 642,637"/>
                    <polyline class="limit" points="660,598 670,598 677,610 687,620 683,627 680,622 673,623 663,640 652,655"/>
                    <polyline class="limit" points="683,627 693,637 700,638"/>
                    <polyline class="limit" points="708,550 707,563 713,573"/>
                    <polygon class="dept-sel" points="444,193 433,203 432,208 427,206 424,218 418,240 417,265 423,270 417,282 437,307 439,316 447,316 448,307 457,307 458,300 464,297 462,293 454,289 447,282 445,267 447,263 444,257 444,248 451,238 452,222 447,210"/>
                </g>
            </svg>
        </div>

        <aside class="dock">
            <div class="dock-title dock-title-r">
                <span class="dock-btns">
                    <svg class="dock-ic"><use href="#i-float"/></svg>
                    <svg class="dock-ic"><use href="#i-close"/></svg>
                </span>
            </div>
            <div class="dock-body">
                <div class="dark-side"></div>
                <div class="dock-pane">
                    <div class="scroll-area">
                        <div class="scroll-inner">
                            <div class="sym-list">
                                <div class="sym-rows">
                                    <div class="sym-row"><span class="sym-name"></span><span class="sym-tag">Grayscale</span></div>
                                    <div class="sym-row"><span class="sym-name"></span><span class="sym-tag">Grayscale</span></div>
                                    <div class="sym-row"><span class="sym-name"><svg class="hash-ic"><use href="#i-hash"/></svg>hashed black \</span><span class="sym-tag">Grayscale</span></div>
                                </div>
                                <div class="scrollbar sym-scroll"><span class="sb-fill"></span><span class="sb-btn sb-down"></span></div>
                            </div>
                            <div class="sym-actions">
                                <span class="view-btn"><svg class="ic-s"><use href="#i-grid"/></svg></span>
                                <span class="view-btn view-on"><svg class="ic-s"><use href="#i-table"/></svg></span>
                                <span class="btn btn-save">Guardar símbolo</span>
                                <span class="btn btn-adv">Avanzado<span class="caret"></span></span>
                            </div>
                        </div>
                        <div class="scrollbar outer-scroll"><span class="sb-fill"></span><span class="sb-btn sb-down"></span></div>
                    </div>
                    <div class="collapse-head"><span class="tri"></span>Representación de capas</div>
                    <div class="apply-row">
                        <span class="btn btn-icon"><svg class="ic-s"><use href="#i-undo-o"/></svg></span>
                        <span class="btn btn-icon"><svg class="ic-s"><use href="#i-redo-g"/></svg></span>
                        <span class="check checked check-live"></span>
                        <span class="live-label">Actualización en vivo</span>
                        <span class="btn btn-apply"><svg class="btn-ic"><use href="#i-check"/></svg>Aplicar</span>
                    </div>
                </div>
            </div>
            <div class="dock-tabs">
                <span class="dock-tab dock-tab-on">Estilo de capas</span>
                <span class="dock-tab dock-tab-off">Caja de herramientas de Procesos</span>
            </div>
        </aside>
    </div>

    <footer class="statusbar">
        <label class="locator"><svg class="ic-s"><use href="#i-search"/></svg><span>Escriba para localizar (Ctrl+K)</span></label>
        <span class="status-msg">1 objeto espacial seleccionado en la capa Departamentos.</span>
        <span class="st-label st-coordl">Coordenada</span>
        <span class="st-field st-coord">-72.55,-3.09</span>
        <svg class="st-mouse"><use href="#i-mouse"/></svg>
        <span class="st-label st-escala">Escala</span>
        <span class="st-field st-scale">1:12069038<span class="st-drop"><span class="caret caret-dark"></span></span></span>
        <svg class="st-lock"><use href="#i-lock"/></svg>
        <span class="st-label st-amp">Amplificador</span>
        <span class="st-field st-spin st-mag">100%<span class="spin"></span></span>
        <span class="st-label st-rot">Rotación</span>
        <span class="st-field st-spin st-rotv">0.0 °<span class="spin"></span></span>
        <span class="check checked check-render"></span>
        <span class="st-label st-rend">Representar</span>
        <svg class="st-crs"><use href="#i-crs"/></svg>
        <span class="st-label st-epsg">EPSG:4326</span>
        <svg class="st-chat"><use href="#i-chat"/></svg>
    </footer>
</div>

<section class="window win-symbols">
    <div class="win-bar">
        <span class="dot"></span><span class="dot"></span><span class="dot"></span>
    </div>
    <div class="win-body sm-body">
        <div class="sm-tabs">
            <span class="sm-tab">Mapa de color</span>
            <span class="sm-tab sm-tab-abc"><span class="abc-mini">abc</span><span class="sm-fmt">Formato</span></span>
            <span class="sm-arrow sm-arrow-off"><span class="tri-l"></span></span>
            <span class="sm-arrow"><span class="tri-r"></span></span>
        </div>
        <div class="sm-table"><div class="sm-head"></div></div>
        <div class="sm-filter"><svg class="ic-s"><use href="#i-search"/></svg><span>Filtrar símbolos...</span></div>
        <div class="sm-foot"><span class="btn btn-cerrar2"><svg class="btn-ic"><use href="#i-x"/></svg><span><u>C</u>errar</span></span></div>
    </div>
</section>

<section class="window win-import">
    <div class="win-bar win-bar-import">
        <span class="win-title">Importar elemento(s)</span>
        <span class="dot dot-close"></span>
    </div>
    <div class="win-body im-body">
        <div class="form-row">
            <span class="form-label">Importar desde</span>
            <span class="field combo">Archivo<span class="caret caret-dark"></span></span>
        </div>
        <div class="form-row">
            <span class="form-label">Archivo</span>
            <span class="field field-grow">/home/barja/Documentos/GitHub/WKT/Regions_Peru.xml<svg class="clear-ic"><use href="#i-clear"/></svg></span>
            <span class="btn btn-dots">...</span>
        </div>
        <div class="check-rows">
            <div class="check-row"><span class="check"></span><span class="check-text">Añadir a favoritos</span></div>
            <div class="check-row"><span class="check"></span><span class="check-text">No importar etiquetas empotradas</span></div>
        </div>
        <div class="form-row form-row-tags">
            <span class="form-label">Etiqueta(s) adicional(es)</span>
            <span class="field">Regions_Peru</span>
        </div>
        <div class="hint">Sugerencia: separar múltiples etiquetas con comas</div>
        <div class="list-label">Seleccionar elementos a importar</div>
        <div class="sym-view">
            <div class="sym-grid">
                <div class="sym-line">
                    <figure class="sym"><svg class="sym-ic" viewBox="532 334 44 38"><polygon points="553,335 557,340 556,350 555,360 560,365 554,370 548,360 546,352 548,340"/></svg><figcaption>Amazonas</figcaption></figure>
                    <figure class="sym"><svg class="sym-ic" viewBox="603 334 44 38"><polygon points="621,334 630,338 637,352 634,363 626,370 620,367 612,348 615,342"/></svg><figcaption>Ancash</figcaption></figure>
                    <figure class="sym"><svg class="sym-ic" viewBox="674 334 44 38"><polygon points="677,335 691,340 708,343 715,352 712,358 695,367 685,370 682,353 677,342"/></svg><figcaption>Apurimac</figcaption></figure>
                    <figure class="sym"><svg class="sym-ic" viewBox="745 334 44 38"><polygon points="746,346 756,349 765,343 777,341 788,350 786,358 779,366"/></svg><figcaption>Arequipa</figcaption></figure>
                    <figure class="sym"><svg class="sym-ic" viewBox="816 334 44 38"><polygon points="833,335 838,337 847,348 842,353 845,362 849,362 842,368 836,370 828,362 826,352 832,345"/></svg><figcaption>Ayacucho</figcaption></figure>
                    <figure class="sym"><svg class="sym-ic" viewBox="887 334 44 38"><polygon points="905,335 908,347 916,362 918,370 908,368 901,367 899,353 901,340"/></svg><figcaption>Cajamarca</figcaption></figure>
                    <figure class="sym"><svg class="sym-ic" viewBox="958 334 44 38"><polygon points="969,335 979,338 981,348 994,352 990,368 981,363 977,357 969,352 964,343"/></svg><figcaption>Cusco</figcaption></figure>
                    <figure class="sym sym-last"><svg class="sym-ic" viewBox="1033 334 44 38"><polygon points="1055,335 1063,335 1068,345 1061,368 1049,370 1041,360 1049,348 1051,340"/></svg><figcaption>Huancavelica</figcaption></figure>
                </div>
                <div class="sym-line">
                    <figure class="sym"><svg class="sym-ic" viewBox="529 412 44 38"><polygon points="533,417 545,418 553,415 557,430 565,428 555,443 542,447 537,433 540,427"/></svg><figcaption>Huánuco</figcaption></figure>
                    <figure class="sym"><svg class="sym-ic" viewBox="603 412 44 38"><polygon points="612,418 632,415 636,440 612,446"/></svg><figcaption>Ica</figcaption></figure>
                    <figure class="sym"><svg class="sym-ic" viewBox="674 412 44 38"><polygon points="690,418 711,420 716,428 714,433 717,438 712,442 690,445"/></svg><figcaption>Junín</figcaption></figure>
                    <figure class="sym"><svg class="sym-ic" viewBox="745 412 44 38"><polygon points="748,415 752,418 762,423 773,423 776,415 777,423 779,433 788,433 786,438 775,437 762,446 754,435 746,418"/></svg><figcaption>La Libertad</figcaption></figure>
                    <figure class="sym sym-wide"><svg class="sym-ic" viewBox="819 412 44 38"><polygon points="841,413 855,425 851,433 856,442 842,448 825,432"/></svg><figcaption>Lambayeque</figcaption></figure>
                    <figure class="sym sym-lima"><svg class="sym-ic" viewBox="894 412 44 38"><polygon points="901,415 916,413 929,433 930,442 920,448 910,435 903,425"/></svg><figcaption>Lima</figcaption></figure>
                    <figure class="sym"><svg class="sym-ic" viewBox="965 412 44 38"><polygon points="979,413 988,418 1002,423 1000,432 990,437 979,447 975,437 970,430 971,423 979,420"/></svg><figcaption>Loreto</figcaption></figure>
                    <figure class="sym"><svg class="sym-ic" viewBox="1036 412 44 38"><polygon points="1057,413 1057,423 1068,425 1077,437 1068,448 1051,447 1040,437 1038,427 1051,423"/></svg><figcaption>Madre de Dios</figcaption></figure>
                </div>
            </div>
            <div class="scrollbar list-scroll">
                <span class="sb-btn sb-up"></span>
                <span class="sb-fill"></span>
                <span class="sb-handle"></span>
                <span class="sb-btn sb-down"></span>
            </div>
        </div>
        <div class="dialog-btns">
            <span class="btn btn-help"><span class="help-q">?</span>Ayuda</span>
            <span class="btn btn-all">Seleccionar todo</span>
            <span class="btn btn-clear">Limpiar selección</span>
            <span class="btn btn-cerrar"><svg class="btn-ic"><use href="#i-x"/></svg><span><u>C</u>errar</span></span>
            <span class="btn btn-import"><svg class="btn-ic"><use href="#i-check"/></svg>Importar</span>
        </div>
    </div>
</section>

<aside class="tooltip">
    <div class="tip-title">Amazonas</div>
    <div class="tip-tag">No etiquetado</div>
    <svg class="tip-sym" viewBox="618 466 40 84"><polygon points="640,470 645,488 641,503 641,524 652,533 648,540 642,545 637,546 623,525 625,517 622,510 623,493 630,477"/></svg>
</aside>

<svg class="cursor" viewBox="0 0 14 20"><path d="M1 1v15l4-3 3 6 3-1.500-3-6h5z" fill="#fff" stroke="#222"/></svg>
</body>
</html>
```

FILE: styles.css
```css
html, body {
    margin: 0;
    height: 716px;
    overflow: hidden;
    background: #efefef;
    font-family: "Noto Sans", sans-serif;
    font-size: 11px;
    color: #1f1f1f;
}

.sprite {
    position: absolute;
    width: 0;
    height: 0;
}

.ic-txt { font: 10px "Noto Sans", sans-serif; fill: #444; }
.ic-tiny { font: 6px "Noto Sans", sans-serif; fill: #555; }
.ic-t { font: bold 12px "Liberation Serif", serif; fill: #555; }
.ic-q { font: bold 11px "Noto Sans", sans-serif; fill: #fff; }
.ic-abc { font: bold 6.500px "Noto Sans", sans-serif; fill: #333; }

.app {
    display: flex;
    flex-direction: column;
    height: 716px;
}

.topline {
    height: 3px;
    background: #000;
    flex: none;
}

/* menu */
.menubar {
    height: 19px;
    flex: none;
    display: flex;
    align-items: center;
    padding-left: 7px;
    gap: 14px;
    border-bottom: 1px solid #d8d8d8;
}

.menu-item u {
    text-underline-offset: 2px;
}

.menu-edit {
    margin-left: 1px;
}

.menu-capa {
    margin-left: 2px;
}

/* toolbars */
.toolbar {
    flex: none;
    display: flex;
    align-items: center;
    padding-top: 1px;
    border-bottom: 1px solid #c4c4c4;
    box-sizing: border-box;
}

.toolbar-one {
    height: 31px;
}

.toolbar-two {
    height: 32px;
}

.tb {
    width: 25px;
    height: 24px;
    flex: none;
    display: flex;
    align-items: center;
    justify-content: center;
    box-sizing: border-box;
}

.tb-on {
    background: #dedede;
    border: 1px solid #a8a8a8;
    border-radius: 3px;
}

.off .ic {
    opacity: 0.35;
    filter: grayscale(1);
}

.ic {
    width: 18px;
    height: 18px;
}

.ic-s {
    width: 16px;
    height: 16px;
    flex: none;
}

.dd {
    width: 12px;
    flex: none;
    display: flex;
    justify-content: center;
}

.dd::after {
    content: "";
    border: 4px solid transparent;
    border-top: 5px solid #444;
    border-bottom: 0;
}

.dd-off::after {
    border-top-color: #c8c8c8;
}

.dd-on {
    height: 22px;
    align-items: center;
    background: #dedede;
    border: 1px solid #a8a8a8;
    border-radius: 3px;
    box-sizing: border-box;
}

.grip {
    width: 16px;
    height: 22px;
    flex: none;
    box-sizing: border-box;
    padding: 0 5px;
    background: radial-gradient(circle, #a4a4a4 0.8px, transparent 1.1px) 0 0 / 3px 3px;
    background-origin: content-box;
    background-clip: content-box;
}

.grip-first {
    width: 9.500px;
    padding: 0 3px 0 1px;
}

.tb-sep {
    width: 7px;
    height: 20px;
    flex: none;
    background: linear-gradient(#bbb, #bbb) center / 1px 100% no-repeat;
}

/* panels */
.main {
    flex: 1;
    display: flex;
    min-height: 0;
    position: relative;
}

.layers {
    width: 239px;
    flex: none;
    display: flex;
    flex-direction: column;
    border-right: 1px solid #bcbcbc;
}

.dock-title {
    height: 20px;
    flex: none;
    display: flex;
    align-items: center;
    justify-content: space-between;
    font-size: 11.500px;
    padding: 0 2px 0 1px;
}

.dock-name {
    margin-top: -2px;
}

.dock-btns {
    display: flex;
    gap: 2px;
    padding-right: 1px;
}

.dock-ic {
    width: 12px;
    height: 12px;
}

.layers-tools {
    height: 30px;
    flex: none;
    display: flex;
    align-items: center;
    padding-left: 1px;
}

.lt {
    width: 25px;
    height: 24px;
    flex: none;
    display: flex;
    align-items: center;
    justify-content: center;
    box-sizing: border-box;
}

.lt-on {
    background: #dedede;
    border: 1px solid #b8b8b8;
    border-radius: 3px;
}

.lt-expr {
    position: relative;
}

.eps {
    font-size: 15px;
    color: #7a3a80;
    line-height: 20px;
    margin: -4px 0 0 -8px;
}

.eps-ic {
    position: absolute;
    left: 11px;
    top: 13px;
    width: 10px;
    height: 8px;
}

.layers-tools .dd {
    width: 11px;
    margin-right: 1px;
}

.tree {
    flex: 1;
    background: #fff;
    border-top: 1px solid #c4c4c4;
}

.tree-row {
    height: 18px;
    display: flex;
    align-items: center;
    font-weight: 700;
    font-size: 11px;
    position: relative;
}

.tree-row::after {
    content: "";
    position: absolute;
    right: 1px;
    top: 0;
    bottom: 0;
    width: 2px;
    background: #f0f0f0;
}

.tree-sel {
    background: #308cc6;
    color: #fff;
}

.arrow-none {
    width: 21px;
    flex: none;
    display: flex;
    justify-content: center;
    padding-right: 5px;
    box-sizing: border-box;
}

.arrow-right::after {
    content: "";
    border: 4px solid transparent;
    border-left: 5px solid #555;
    border-right: 0;
}

.check {
    width: 14px;
    height: 14px;
    flex: none;
    box-sizing: border-box;
    background: #fff;
    border: 1px solid #b5b5b5;
    border-radius: 2px;
    display: inline-flex;
    align-items: center;
    justify-content: center;
}

.checked::after {
    content: "";
    width: 4px;
    height: 9px;
    margin-top: -2px;
    border: solid #111;
    border-width: 0 2px 2px 0;
    transform: rotate(38deg);
}

.swatch {
    width: 16px;
    height: 15px;
    flex: none;
    margin-left: 6px;
    box-sizing: border-box;
    background: #5b86dc;
    border: 1px solid #3e5fa0;
}

.tree-ic {
    width: 16px;
    height: 16px;
    flex: none;
    margin-left: 6px;
}

.tree-name {
    margin: -2px 0 0 6px;
}

.tree-sel .tree-name {
    text-decoration: underline;
    text-underline-offset: 2px;
}

.tree-off {
    color: #777;
    font-style: italic;
}

/* map */
.map {
    width: 574px;
    flex: none;
    margin: 1px 8px 1px 6px;
    background: #fff;
    outline: 1px solid #c4c4c4;
}

.map-svg {
    display: block;
    width: 574px;
    height: 598px;
}

.dept {
    fill: #6d8ce6;
    stroke: #4a4f60;
    stroke-width: 1;
}

.limit {
    fill: none;
    stroke: #333a50;
    stroke-width: 1;
}

.dept-sel {
    fill: #ffff00;
    stroke: #3c3c3c;
    stroke-width: 1;
}

/* right dock */
.dock {
    flex: 1;
    display: flex;
    flex-direction: column;
    min-width: 0;
    margin-left: -3px;
}

.dock-title-r {
    justify-content: flex-end;
    height: 18px;
}

.dock-body {
    flex: 1;
    display: flex;
    min-height: 0;
    padding-left: 3px;
}

.dark-side {
    width: 38px;
    flex: none;
    background: #595959;
    margin-bottom: 4px;
}

.dock-pane {
    flex: 1;
    display: flex;
    flex-direction: column;
    min-width: 0;
    padding-left: 3px;
}

.scroll-area {
    flex: 1;
    display: flex;
    min-height: 0;
    overflow: hidden;
}

.scroll-inner {
    width: 468px;
    flex: none;
    display: flex;
    flex-direction: column;
    justify-content: flex-end;
}

.sym-list {
    display: flex;
    background: #fff;
    border: 1px solid #b8b8b8;
    height: 70px;
    box-sizing: border-box;
    overflow: hidden;
    flex: none;
}

.sym-rows {
    flex: 1;
    display: flex;
    flex-direction: column;
    justify-content: flex-end;
    margin-bottom: -2px;
}

.sym-row {
    height: 19px;
    display: flex;
    align-items: center;
    font-size: 12px;
    flex: none;
}

.sym-name {
    width: 343px;
    flex: none;
    padding-left: 22px;
    box-sizing: border-box;
    display: flex;
    align-items: center;
    gap: 6px;
}

.hash-ic {
    width: 13px;
    height: 13px;
    flex: none;
}

.scrollbar {
    display: flex;
    flex-direction: column;
    flex: none;
    width: 15px;
}

.sym-scroll {
    border-left: 1px solid #c8c8c8;
    box-sizing: border-box;
}

.outer-scroll {
    margin-left: 8px;
    justify-content: flex-end;
}

.sb-fill {
    flex: 1;
    background: #f6f6f6;
}

.sb-handle {
    height: 43px;
    flex: none;
    background: #e0e0e0;
    border-top: 1px solid #c8c8c8;
}

.sb-btn {
    height: 14px;
    flex: none;
    display: flex;
    align-items: center;
    justify-content: center;
    background: #f3f3f3;
    border-top: 1px solid #c8c8c8;
}

.sb-down::after {
    content: "";
    border: 4px solid transparent;
    border-top: 5px solid #444;
    border-bottom: 0;
}

.sb-up {
    border-top: 0;
    border-bottom: 1px solid #c8c8c8;
}

.sb-up::after {
    content: "";
    border: 4px solid transparent;
    border-bottom: 5px solid #444;
    border-top: 0;
}

.sym-actions {
    height: 28px;
    flex: none;
    display: flex;
    align-items: flex-start;
    padding-top: 5px;
    box-sizing: border-box;
    position: relative;
}

.view-btn {
    width: 24px;
    height: 24px;
    flex: none;
    display: flex;
    align-items: center;
    justify-content: center;
    box-sizing: border-box;
}

.view-on {
    background: #dedede;
    border: 1px solid #c0c0c0;
    border-radius: 3px 3px 0 0;
}

.btn {
    display: inline-flex;
    align-items: center;
    justify-content: center;
    box-sizing: border-box;
    background: linear-gradient(#f8f8f8, #ececec);
    border: 1px solid #b4b4b4;
    border-radius: 3px;
    font-size: 11px;
    flex: none;
}

.btn-save {
    width: 94px;
    height: 24px;
    margin-left: 240px;
}

.btn-adv {
    width: 80px;
    height: 24px;
    margin-left: 6px;
    justify-content: flex-start;
    padding-left: 8px;
    gap: 13px;
}

.caret {
    display: inline-block;
    border: 3.500px solid transparent;
    border-top: 4px solid #666;
    border-bottom: 0;
}

.caret-dark {
    border-top-color: #555;
    border-width: 4px;
    border-top-width: 5px;
    border-bottom-width: 0;
}

.collapse-head {
    height: 34px;
    flex: none;
    display: flex;
    align-items: center;
    font-weight: 700;
    font-size: 11px;
    padding: 3px 0 0 5px;
    box-sizing: border-box;
}

.tri {
    width: 0;
    height: 0;
    border: 5px solid transparent;
    border-left: 8px solid #222;
    border-right: 0;
    margin-right: 9px;
}

.apply-row {
    height: 24px;
    flex: none;
    display: flex;
    align-items: center;
    margin-bottom: 4px;
}

.btn-icon {
    width: 24px;
    height: 24px;
    margin-right: 6px;
}

.check-live {
    margin-left: 211px;
}

.live-label {
    margin-left: 6px;
    width: 120px;
    flex: none;
}

.btn-apply {
    width: 79px;
    height: 24px;
    gap: 3px;
}

.btn-ic {
    width: 14px;
    height: 14px;
    flex: none;
}

.dock-tabs {
    height: 27px;
    flex: none;
    display: flex;
    align-items: flex-start;
    border-top: 1px solid #c4c4c4;
    box-sizing: border-box;
}

.dock-tab {
    display: flex;
    align-items: center;
    border: 1px solid #c4c4c4;
    border-top: 0;
    border-radius: 0 0 3px 3px;
    box-sizing: border-box;
}

.dock-tab-off {
    width: 200px;
    height: 23px;
    justify-content: center;
    background: #d9d9d9;
}

.dock-tab-on {
    height: 25px;
    width: 100px;
    padding-left: 11px;
    background: #f6f6f6;
}

/* status bar */
.statusbar {
    height: 30px;
    flex: none;
    display: flex;
    align-items: center;
    font-size: 8.600px;
    letter-spacing: -0.27px;
    position: relative;
}

.statusbar svg {
    flex: none;
}

.locator {
    width: 270px;
    height: 22px;
    margin-left: 1px;
    flex: none;
    display: flex;
    align-items: center;
    gap: 6px;
    padding-left: 6px;
    box-sizing: border-box;
    background: #fff;
    border: 1px solid #b4b4b4;
    border-radius: 3px;
    color: #8a8a8a;
    font-size: 11px;
    letter-spacing: 0;
}

.status-msg {
    margin-left: 8px;
    width: 328px;
    flex: none;
}

.st-field {
    height: 21px;
    flex: none;
    display: flex;
    align-items: center;
    box-sizing: border-box;
    background: #fff;
    border: 1px solid #b4b4b4;
    border-radius: 3px;
    position: relative;
}

.st-label {
    flex: none;
    white-space: nowrap;
}

.st-coordl {
    width: 47px;
}

.st-coord {
    width: 68px;
    margin-left: 3px;
    justify-content: center;
}

.st-mouse {
    width: 16px;
    height: 16px;
    margin-left: 4px;
}

.st-escala {
    width: 23px;
    margin-left: 13px;
}

.st-scale {
    width: 80px;
    margin-left: 5px;
    padding-left: 3px;
}

.st-drop {
    position: absolute;
    right: 0;
    top: 0;
    bottom: 0;
    width: 20px;
    background: #efefef;
    border-left: 1px solid #b4b4b4;
    display: flex;
    align-items: center;
    justify-content: center;
}

.st-lock {
    width: 16px;
    height: 16px;
    margin-left: 10px;
}

.st-amp {
    width: 48px;
    margin-left: 7px;
}

.st-spin {
    padding-left: 4px;
}

.st-mag {
    width: 85px;
    margin-left: 4px;
}

.st-rot {
    width: 33px;
    margin-left: 12px;
}

.st-rotv {
    width: 83px;
    margin-left: 9px;
}

.spin {
    position: absolute;
    right: 0;
    top: 0;
    bottom: 0;
    width: 13px;
    background: #efefef;
    border-left: 1px solid #b4b4b4;
}

.spin::before, .spin::after {
    content: "";
    position: absolute;
    left: 2px;
    border: 4px solid transparent;
}

.spin::before {
    top: 2px;
    border-bottom: 5px solid #444;
    border-top: 0;
}

.spin::after {
    bottom: 2px;
    border-top: 5px solid #444;
    border-bottom: 0;
}

.check-render {
    margin-left: 8px;
}

.st-rend {
    width: 46px;
    margin-left: 4px;
}

.st-crs {
    width: 16px;
    height: 16px;
    margin-left: 17px;
}

.st-epsg {
    width: 40px;
    margin-left: 1px;
}

.st-chat {
    width: 18px;
    height: 18px;
    margin-left: 20px;
}

/* floating windows */
.window {
    position: absolute;
    display: flex;
    flex-direction: column;
    box-sizing: border-box;
    background: #000;
    border-radius: 5px 5px 0 0;
    padding: 0 4px 4px;
    box-shadow: 0 0 18px rgba(0, 0, 0, 0.55);
}

.win-bar {
    height: 28px;
    flex: none;
    display: flex;
    align-items: center;
    justify-content: flex-end;
    gap: 8px;
    padding-right: 7px;
}

.win-body {
    flex: 1;
    background: #efefef;
    min-height: 0;
}

.dot {
    width: 14px;
    height: 14px;
    border-radius: 50%;
    background: #555;
}

.dot-close {
    background: #d01414;
    position: absolute;
    right: 9px;
    top: 5px;
}

/* symbol manager behind the dialog */
.win-symbols {
    left: 1000px;
    top: 102px;
    width: 362px;
    height: 414px;
    padding-right: 1px;
}

.sm-body {
    display: flex;
    flex-direction: column;
    padding: 8px 10px 0 0;
    box-sizing: border-box;
}

.sm-tabs {
    height: 24px;
    flex: none;
    display: flex;
    justify-content: flex-end;
    align-items: stretch;
    font-size: 12px;
}

.sm-tab {
    display: flex;
    align-items: center;
    padding: 0 12px 0 0;
    background: #e6e6e6;
    border: 1px solid #c8c8c8;
    width: 76px;
    justify-content: flex-end;
    box-sizing: border-box;
    white-space: nowrap;
    flex: none;
}

.sm-tab-abc {
    width: 77px;
    padding-right: 0;
    border-left: 0;
    gap: 6px;
    overflow: hidden;
}

.sm-fmt {
    margin-right: -2px;
}

.abc-mini {
    font-size: 7px;
    font-weight: 700;
    color: #444;
}

.sm-arrow {
    width: 15px;
    flex: none;
    display: flex;
    align-items: center;
    justify-content: center;
    background: #f4f4f4;
    border: 1px solid #c0c0c0;
    border-radius: 3px;
    box-sizing: border-box;
}

.tri-r, .tri-l {
    width: 0;
    height: 0;
    border: 4px solid transparent;
}

.tri-r {
    border-left: 5px solid #333;
    border-right: 0;
}

.tri-l {
    border-right: 5px solid #ccc;
    border-left: 0;
}

.sm-table {
    height: 277px;
    flex: none;
    margin-top: 6px;
    background: #fff;
    border: 1px solid #bcbcbc;
    box-sizing: border-box;
}

.sm-head {
    height: 20px;
    background: linear-gradient(#efefef, #e4e4e4);
    border-bottom: 1px solid #b0b0b0;
}

.sm-filter {
    height: 24px;
    flex: none;
    margin-top: 7px;
    display: flex;
    justify-content: flex-start;
    align-items: center;
    gap: 5px;
    padding-left: 172px;
    background: #fff;
    border: 1px solid #c0c0c0;
    border-radius: 3px;
    box-sizing: border-box;
    color: #8a8a8a;
    font-size: 12px;
}

.sm-foot {
    display: flex;
    justify-content: flex-end;
    margin-top: 6px;
    padding-right: 0;
}

.btn-cerrar2 {
    width: 80px;
    height: 23px;
    gap: 3px;
    font-size: 12px;
}

/* import dialog */
.win-import {
    left: 499px;
    top: 91px;
    width: 676px;
    height: 459px;
    z-index: 2;
}

.win-bar-import {
    justify-content: center;
    height: 27px;
    padding: 0 20px 3px 0;
    box-sizing: border-box;
}

.win-title {
    color: #fff;
    font-weight: 700;
    font-size: 11.800px;
}

.im-body {
    padding: 11px 12px 0;
    box-sizing: border-box;
}

.form-row {
    display: flex;
    align-items: center;
    height: 23px;
    margin-bottom: 7px;
}

.form-label {
    width: 219px;
    flex: none;
}

.field {
    flex: 1;
    height: 23px;
    display: flex;
    align-items: center;
    justify-content: space-between;
    box-sizing: border-box;
    padding: 0 9px 0 2px;
    background: #fff;
    border: 1px solid #b4b4b4;
    border-radius: 3px;
}

.combo {
    background: linear-gradient(#f8f8f8, #ececec);
    padding-left: 4px;
}

.field-grow {
    margin-right: 6px;
}

.clear-ic {
    width: 14px;
    height: 14px;
    flex: none;
    margin-right: -2px;
}

.btn-dots {
    width: 23px;
    height: 23px;
}

.check-rows {
    display: flex;
    flex-direction: column;
    gap: 14px;
    margin: 11px 0 10px;
}

.check-row {
    height: 14px;
    display: flex;
    align-items: center;
    gap: 5px;
}

.check-text {
    margin-top: -2px;
}

.form-row-tags {
    margin-bottom: 0;
}

.hint {
    margin: 6px 0 0 219px;
    height: 17px;
    display: flex;
    align-items: center;
}

.list-label {
    margin-top: 5px;
    height: 17px;
    display: flex;
    align-items: center;
}

.sym-view {
    margin-top: 6px;
    height: 186px;
    display: flex;
    box-sizing: border-box;
    background: #fff;
    border: 1px solid #b8b8b8;
}

.sym-grid {
    flex: 1;
    padding: 14px 0 0 3px;
    box-sizing: border-box;
}

.sym-line {
    display: flex;
    height: 78px;
}

.sym {
    width: 71px;
    margin: 0;
    flex: none;
    display: flex;
    flex-direction: column;
    align-items: center;
    text-align: center;
}

.sym-wide {
    width: 75px;
}

.sym-lima {
    width: 74px;
}

.sym-last {
    width: 78px;
}

.sym figcaption {
    margin-top: 10px;
    line-height: 16px;
    width: 68px;
    white-space: normal;
}

.sym-last figcaption {
    width: 78px;
}

.sym-ic {
    width: 44px;
    height: 38px;
    flex: none;
    overflow: visible;
}

.sym-ic polygon {
    fill: url(#sym-green);
    filter: url(#rough-s);
}

.tip-sym polygon {
    fill: url(#sym-green);
}

.list-scroll {
    border-left: 1px solid #d8d8d8;
    box-sizing: border-box;
    margin-right: 0;
}

.dialog-btns {
    margin-top: 7px;
    display: flex;
    gap: 6px;
}

.dialog-btns .btn {
    height: 23px;
    gap: 3px;
}

.btn-help {
    width: 90px;
    margin-right: 138px;
    justify-content: flex-start;
    padding-left: 16px;
}

.help-q {
    font-size: 16px;
    font-weight: 700;
    line-height: 20px;
    color: #d8d8d8;
    margin-right: 5px;
}

.btn-all { width: 114px; }
.btn-clear { width: 118px; }
.btn-cerrar { width: 79px; }
.btn-import { width: 80px; color: #b8b8b8; }

/* tooltip and pointer */
.tooltip {
    position: absolute;
    left: 566px;
    top: 405px;
    width: 145px;
    height: 149px;
    box-sizing: border-box;
    padding: 2px;
    background: #ffffdc;
    border: 1px solid #000;
    color: #000;
    z-index: 3;
    box-shadow: 0 0 14px rgba(0, 0, 0, 0.45);
}

.tip-title {
    font-weight: 700;
    font-size: 13px;
    line-height: 18px;
}

.tip-tag {
    font-style: italic;
    margin-top: 12px;
    line-height: 16px;
}

.tip-sym {
    display: block;
    width: 40px;
    height: 84px;
    margin: 12px 0 0 49px;
}

.cursor {
    position: absolute;
    left: 561px;
    top: 387px;
    width: 14px;
    height: 20px;
    z-index: 4;
}
```
